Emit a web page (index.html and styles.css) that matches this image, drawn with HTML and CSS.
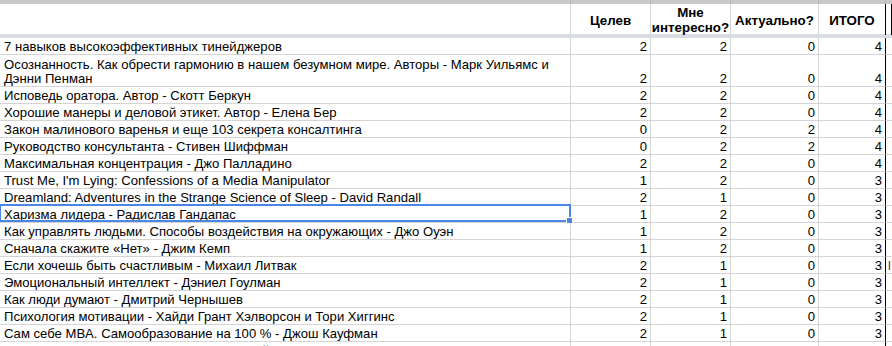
FILE: index.html
```html
<!DOCTYPE html>
<html lang="ru">
<head>
<meta charset="utf-8">
<link rel="stylesheet" href="styles.css">
</head>
<body>
<div class="sheet">
  <div class="row colbar">
    <div class="cell"></div><div class="cell"></div><div class="cell"></div><div class="cell"></div><div class="cell bk"></div><div class="cell bk"></div>
  </div>
  <div class="row head">
    <div class="cell"></div>
    <div class="cell c">Целев</div>
    <div class="cell c">Мне<br>интересно?</div>
    <div class="cell c">Актуально?</div>
    <div class="cell c bk">ИТОГО</div>
    <div class="cell bk"></div>
  </div>
  <div class="freeze"></div>
  <div class="body">
    <div class="row"><div class="cell t">7 навыков высокоэффективных тинейджеров</div><div class="cell n">2</div><div class="cell n">2</div><div class="cell n">0</div><div class="cell n bk">4</div><div class="cell bk"></div></div>
    <div class="row tall"><div class="cell t">Осознанность. Как обрести гармонию в нашем безумном мире. Авторы - Марк Уильямс и<br>Дэнни Пенман</div><div class="cell n">2</div><div class="cell n">2</div><div class="cell n">0</div><div class="cell n bk">4</div><div class="cell bk"></div></div>
    <div class="row"><div class="cell t">Исповедь оратора. Автор - Скотт Беркун</div><div class="cell n">2</div><div class="cell n">2</div><div class="cell n">0</div><div class="cell n bk">4</div><div class="cell bk"></div></div>
    <div class="row"><div class="cell t">Хорошие манеры и деловой этикет. Автор - Елена Бер</div><div class="cell n">2</div><div class="cell n">2</div><div class="cell n">0</div><div class="cell n bk">4</div><div class="cell bk"></div></div>
    <div class="row"><div class="cell t">Закон малинового варенья и еще 103 секрета консалтинга</div><div class="cell n">0</div><div class="cell n">2</div><div class="cell n">2</div><div class="cell n bk">4</div><div class="cell bk"></div></div>
    <div class="row"><div class="cell t">Руководство консультанта - Стивен Шиффман</div><div class="cell n">0</div><div class="cell n">2</div><div class="cell n">2</div><div class="cell n bk">4</div><div class="cell bk"></div></div>
    <div class="row"><div class="cell t">Максимальная концентрация - Джо Палладино</div><div class="cell n">2</div><div class="cell n">2</div><div class="cell n">0</div><div class="cell n bk">4</div><div class="cell bk"></div></div>
    <div class="row"><div class="cell t">Trust Me, I'm Lying: Confessions of a Media Manipulator</div><div class="cell n">1</div><div class="cell n">2</div><div class="cell n">0</div><div class="cell n bk">3</div><div class="cell bk"></div></div>
    <div class="row"><div class="cell t">Dreamland: Adventures in the Strange Science of Sleep - David Randall</div><div class="cell n">2</div><div class="cell n">1</div><div class="cell n">0</div><div class="cell n bk">3</div><div class="cell bk"></div></div>
    <div class="row sel-row"><div class="cell t">Харизма лидера - Радислав Гандапас<span class="selection"><span class="handle"></span></span></div><div class="cell n">1</div><div class="cell n">2</div><div class="cell n">0</div><div class="cell n bk">3</div><div class="cell bk"></div></div>
    <div class="row"><div class="cell t">Как управлять людьми. Способы воздействия на окружающих - Джо Оуэн</div><div class="cell n">1</div><div class="cell n">2</div><div class="cell n">0</div><div class="cell n bk">3</div><div class="cell bk"></div></div>
    <div class="row"><div class="cell t">Сначала скажите «Нет» - Джим Кемп</div><div class="cell n">1</div><div class="cell n">2</div><div class="cell n">0</div><div class="cell n bk">3</div><div class="cell bk"></div></div>
    <div class="row"><div class="cell t">Если хочешь быть счастливым - Михаил Литвак</div><div class="cell n">2</div><div class="cell n">1</div><div class="cell n">0</div><div class="cell n bk">3</div><div class="cell bk over">l</div></div>
    <div class="row"><div class="cell t">Эмоциональный интеллект - Дэниел Гоулман</div><div class="cell n">2</div><div class="cell n">1</div><div class="cell n">0</div><div class="cell n bk">3</div><div class="cell bk"></div></div>
    <div class="row"><div class="cell t">Как люди думают - Дмитрий Чернышев</div><div class="cell n">2</div><div class="cell n">1</div><div class="cell n">0</div><div class="cell n bk">3</div><div class="cell bk"></div></div>
    <div class="row"><div class="cell t">Психология мотивации - Хайди Грант Хэлворсон и Тори Хиггинс</div><div class="cell n">2</div><div class="cell n">1</div><div class="cell n">0</div><div class="cell n bk">3</div><div class="cell bk"></div></div>
    <div class="row"><div class="cell t">Сам себе MBA. Самообразование на 100 % - Джош Кауфман</div><div class="cell n">2</div><div class="cell n">1</div><div class="cell n">0</div><div class="cell n bk">3</div><div class="cell bk"></div></div>
    <div class="row"><div class="cell t">Позитивное мышление. Путь к успеху - Дейл Карнеги</div><div class="cell n">2</div><div class="cell n">1</div><div class="cell n">0</div><div class="cell n bk">3</div><div class="cell bk"></div></div>
  </div>
</div>
</body>
</html>
```

FILE: styles.css
```css
html, body {
  margin: 0;
  padding: 0;
  background: #fff;
  overflow: hidden;
}
.sheet {
  width: 892px;
  height: 346px;
  overflow: hidden;
  font-family: "Liberation Sans", Arial, sans-serif;
  font-size: 13.1px;
  color: #000;
}
.row {
  display: grid;
  grid-template-columns: 571px 80px 80px 88px 67px 1fr;
  height: 17px;
}
.row.tall {
  height: 32px;
}
.cell {
  box-sizing: border-box;
  border-right: 1px solid #d4d4d4;
  border-bottom: 1px solid #d4d4d4;
  display: flex;
  align-items: flex-end;
  padding: 0 3px 0 4px;
  white-space: nowrap;
  overflow: visible;
  line-height: 14px;
  position: relative;
}
.cell.bk {
  border-right-color: #000;
}
.cell.n {
  justify-content: flex-end;
}
.cell.t {
  z-index: 1;
}
.colbar {
  height: 4px;
  background: #c8c8c8;
}
.colbar .cell {
  border-bottom: none;
  border-right-color: #b4b4b4;
}
.colbar .cell.bk {
  border-right-color: #b4b4b4;
}
.head {
  height: 30px;
}
.head .cell {
  border-bottom: none;
  font-weight: bold;
  font-size: 13.33px;
  align-items: center;
  justify-content: center;
  text-align: center;
  padding: 1px 2px 0;
  line-height: 15px;
}
.freeze {
  height: 4px;
  background: #dadde3;
}
.over {
  color: #8b1a1a;
  padding-left: 2px;
}
.selection {
  position: absolute;
  left: -1px;
  top: -2px;
  width: 572px;
  height: 18px;
  box-sizing: border-box;
  border: 2px solid #4a86e8;
  pointer-events: none;
}
.handle {
  position: absolute;
  right: -4px;
  bottom: -4px;
  width: 5px;
  height: 5px;
  background: #4a86e8;
  border: 1px solid #fff;
}
```
